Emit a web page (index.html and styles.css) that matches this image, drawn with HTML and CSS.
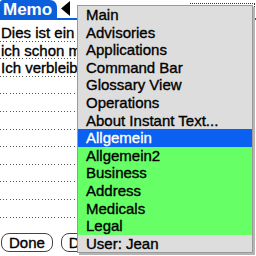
FILE: index.html
```html
<!DOCTYPE html>
<html lang="de">
<head>
  <meta charset="UTF-8" />
  <title>Memo</title>
  <link rel="stylesheet" href="styles.css">
</head>
<body>
  <div class="screen">
    <div class="titlebar">
      <div class="tab">Memo</div>
      <svg class="back" width="10" height="16" viewBox="0 0 10 16">
        <polygon points="0,7.5 9,0 9,15" fill="#000"/>
      </svg>
      <div class="category"></div>
    </div>

    <div class="field">
      <div class="line">Dies ist ein e</div>
      <div class="line">ich schon me</div>
      <div class="line">Ich verbleibe</div>
      <div class="line"></div>
      <div class="line"></div>
      <div class="line"></div>
      <div class="line"></div>
      <div class="line"></div>
      <div class="line"></div>
      <div class="line"></div>
      <div class="line"></div>
    </div>

    <div class="buttons">
      <button class="btn">Done</button>
      <button class="btn btn-cut">D</button>
    </div>

    <ul class="menu">
      <li>Main</li>
      <li>Advisories</li>
      <li>Applications</li>
      <li>Command Bar</li>
      <li>Glossary View</li>
      <li>Operations</li>
      <li>About Instant Text...</li>
      <li class="selected">Allgemein</li>
      <li class="group">Allgemein2</li>
      <li class="group">Business</li>
      <li class="group">Address</li>
      <li class="group">Medicals</li>
      <li class="group">Legal</li>
      <li>User: Jean</li>
    </ul>
  </div>
</body>
</html>
```

FILE: styles.css
```css
body {
  margin: 0;
  background: #fff;
  font-family: "Liberation Sans", Arial, sans-serif;
  font-size: 15px;
  color: #000;
  -webkit-text-stroke: 0.35px currentColor;
}

.screen {
  position: relative;
  width: 256px;
  height: 256px;
  overflow: hidden;
}

.titlebar {
  display: flex;
  align-items: flex-start;
  height: 18px;
  border-bottom: 2px solid #0c5fdc;
}

.tab {
  width: 57px;
  height: 18px;
  background: #0c5fdc;
  color: #fff;
  font-weight: bold;
  font-size: 17px;
  line-height: 20px;
  padding-left: 3px;
  box-sizing: border-box;
  border-radius: 3px 7px 0 0;
  -webkit-text-stroke: 0;
}

.back {
  margin: 1px 0 0 4px;
}

.category {
  margin: 3px 1px 0 auto;
  width: 64px;
  height: 15px;
  border-top: 1px dotted #333;
  border-right: 1px dotted #333;
}

.field {
  width: 77px;
  padding-top: 4px;
}

.line {
  height: 17.6px;
  line-height: 17.6px;
  white-space: nowrap;
  overflow: hidden;
  padding-left: 1px;
  background: repeating-linear-gradient(to right, #555 0 1px, transparent 1px 3.2px) bottom / 100% 1px no-repeat;
}

.buttons {
  display: flex;
  gap: 8px;
  width: 77px;
  overflow: hidden;
  margin: 15px 0 0 1px;
}

.btn {
  font: inherit;
  flex: none;
  height: 19px;
  line-height: 15px;
  padding: 0 7px;
  background: #fff;
  border: 1.5px solid #444;
  border-radius: 8px;
  color: #000;
}

.btn-cut {
  width: 40px;
  text-align: left;
}

.menu {
  position: absolute;
  left: 77px;
  top: 5px;
  width: 174px;
  margin: 0;
  padding: 0;
  list-style: none;
  background: #dddddd;
  border: 1px solid #999;
  box-shadow: 2px 2px 0 #b5b5b5;
}

.menu li {
  height: 17.6px;
  line-height: 17.6px;
  padding-left: 8px;
  white-space: nowrap;
}

.menu .selected {
  background: #0a60f0;
  color: #fff;
}

.menu .group {
  background: #66ff66;
}
```
